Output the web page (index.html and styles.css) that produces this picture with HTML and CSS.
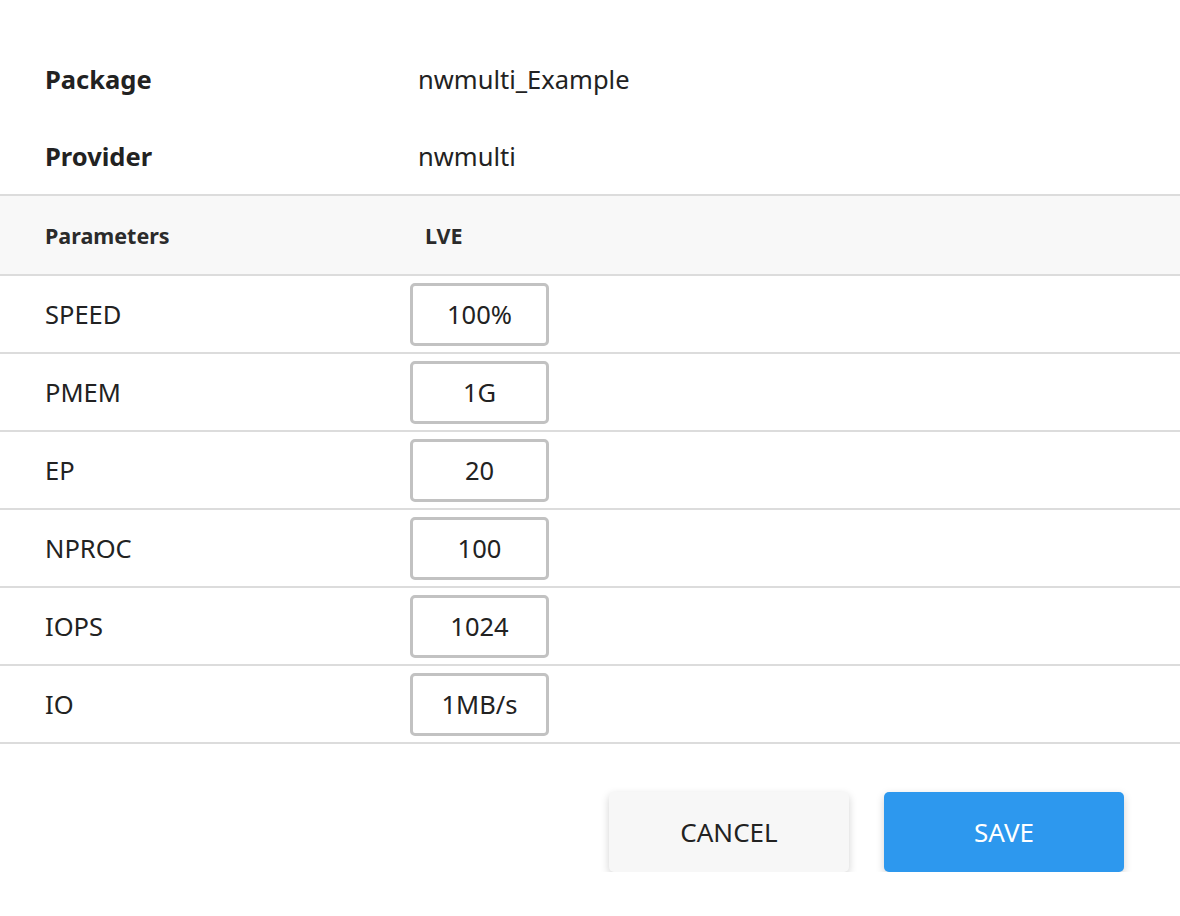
FILE: index.html
```html
<!DOCTYPE html>
<html>
<head>
<meta charset="utf-8">
<link rel="stylesheet" href="styles.css">
</head>
<body>
<div class="dialog">
  <div class="info">
    <div class="info-row"><div class="info-label">Package</div><div class="info-value">nwmulti_Example</div></div>
    <div class="info-row"><div class="info-label">Provider</div><div class="info-value">nwmulti</div></div>
  </div>
  <div class="table">
    <div class="thead">
      <div class="th th-name">Parameters</div>
      <div class="th th-lve">LVE</div>
    </div>
    <div class="tr"><div class="td-name">SPEED</div><div class="td-val"><input class="field" value="100%"></div></div>
    <div class="tr"><div class="td-name">PMEM</div><div class="td-val"><input class="field" value="1G"></div></div>
    <div class="tr"><div class="td-name">EP</div><div class="td-val"><input class="field" value="20"></div></div>
    <div class="tr"><div class="td-name">NPROC</div><div class="td-val"><input class="field" value="100"></div></div>
    <div class="tr"><div class="td-name">IOPS</div><div class="td-val"><input class="field" value="1024"></div></div>
    <div class="tr"><div class="td-name">IO</div><div class="td-val"><input class="field" value="1MB/s"></div></div>
  </div>
  <div class="actions">
    <button class="btn btn-cancel">CANCEL</button>
    <button class="btn btn-save">SAVE</button>
  </div>
</div>
</body>
</html>
```
FILE: styles.css
```css
html, body {
  margin: 0;
  padding: 0;
  background: #fff;
}
body {
  font-family: "Noto Sans", "Open Sans", sans-serif;
  color: #222;
}
.dialog {
  width: 1180px;
}
.info {
  padding-top: 40px;
}
.info-row {
  display: flex;
  align-items: center;
  height: 77px;
  font-size: 25.5px;
}
.info-label {
  width: 373px;
  padding-left: 45px;
  font-weight: 700;
}
.info-value {
  font-weight: 400;
}
.table {
  border-top: 2px solid #dcdcdc;
}
.thead {
  display: flex;
  align-items: center;
  height: 78px;
  background: #f8f8f8;
  border-bottom: 2px solid #dcdcdc;
  font-size: 21.5px;
  font-weight: 700;
  color: #2b2b2b;
}
.th-name {
  width: 380px;
  padding-left: 45px;
}
.tr {
  display: flex;
  align-items: center;
  height: 76px;
  border-bottom: 2px solid #dcdcdc;
}
.td-name {
  width: 365px;
  padding-left: 45px;
  font-size: 25.5px;
}
.field {
  box-sizing: border-box;
  width: 139px;
  height: 63px;
  border: 3px solid #c2c2c2;
  border-radius: 5px;
  background: #fff;
  font-family: "Noto Sans", "Open Sans", sans-serif;
  font-size: 25.5px;
  color: #222;
  text-align: center;
  padding: 0;
  outline: none;
}
.actions {
  display: flex;
  justify-content: flex-end;
  gap: 35px;
  padding: 48px 56px 0 0;
}
.btn {
  width: 240px;
  height: 80px;
  border: none;
  border-radius: 5px;
  font-family: "Noto Sans", "Open Sans", sans-serif;
  font-size: 26px;
  box-shadow: 0 3px 8px rgba(0, 0, 0, 0.18);
  cursor: pointer;
  padding: 0;
}
.btn-cancel {
  background: #f7f7f7;
  color: #222;
}
.btn-save {
  background: #2d98ee;
  color: #fff;
}
```
